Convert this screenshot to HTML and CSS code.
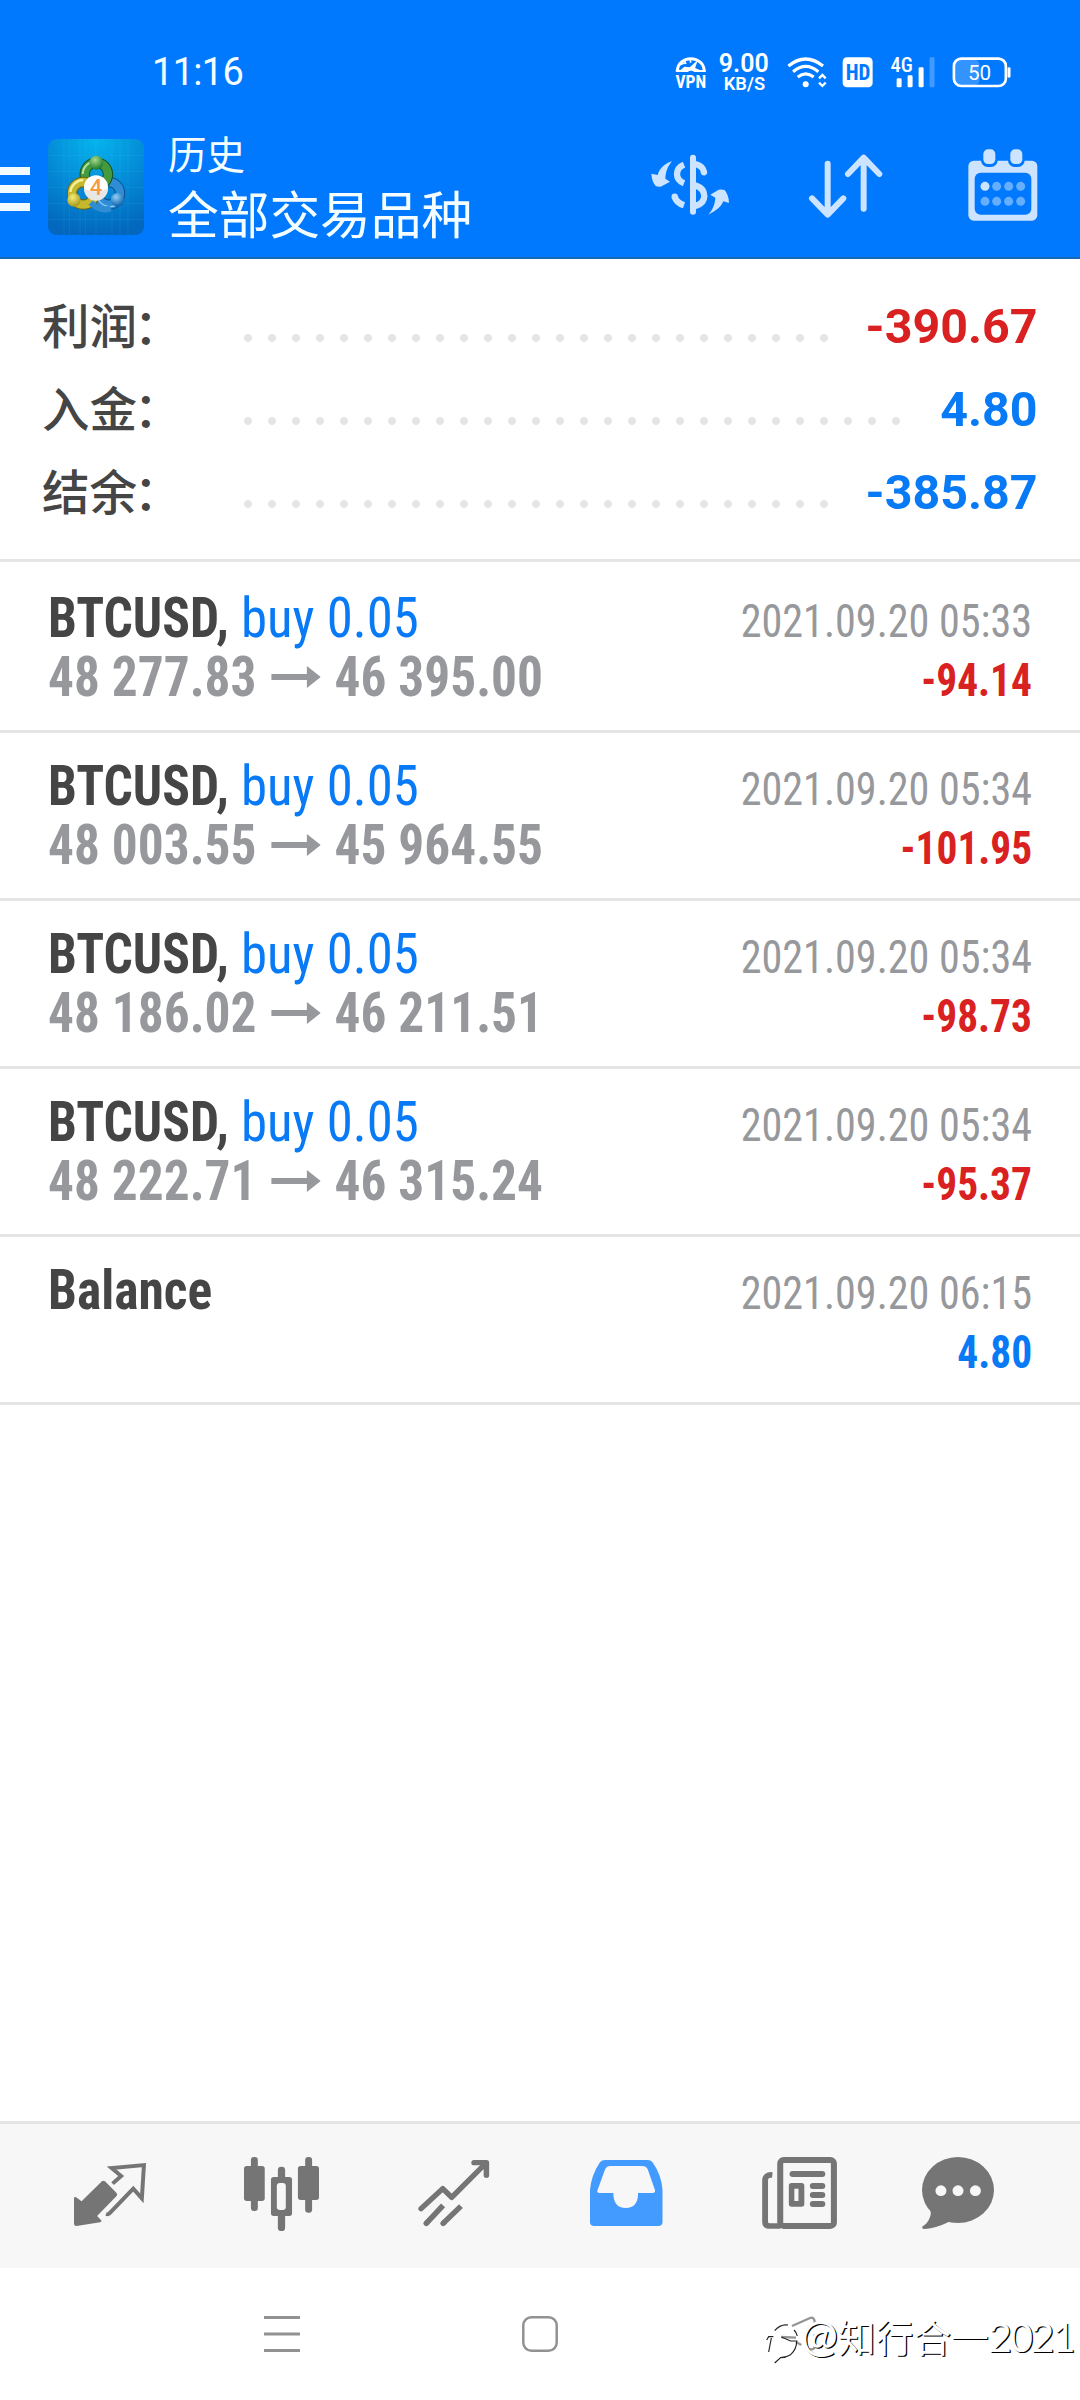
FILE: index.html
```
<!DOCTYPE html>
<html lang="zh-CN">
<head>
<meta charset="utf-8">
<title>历史</title>
<link rel="stylesheet" href="styles.css">
</head>
<body>
<div class="screen">
  <header class="header">
    <div class="status">
      <span class="clock">11:16</span>
      <svg class="status-icons" viewBox="100 20 1020 130" width="340" height="43.3" fill="#fff">
        <!-- vpn -->
        <path d="M113 76A40 36 0 0 1 193 76" fill="none" stroke="#fff" stroke-width="9"/>
        <path d="M108 80V72L122 74L134 64L150 66L174 44L166 68L180 74H198V80H164Q152 72 144 80Z"/>
        <path d="M120 58l16-6M134 44l4 12M152 40v12" stroke="#fff" stroke-width="5"/>
        <text class="cond" x="107" y="127" font-size="56" font-weight="700" textLength="92" lengthAdjust="spacingAndGlyphs">VPN</text>
        <text class="rob" x="237" y="80" font-size="75" font-weight="600" textLength="150">9.00</text>
        <text class="rob" x="252" y="135" font-size="56" font-weight="600" textLength="124" lengthAdjust="spacingAndGlyphs">KB/S</text>
        <!-- wifi -->
        <g fill="none" stroke="#fff" stroke-width="9.5">
          <path d="M446 62Q498 20 550 62M460 79Q498 48 536 79M474 95Q498 76 522 95"/>
          <path d="M538 99l10-10 10 10M538 112l10 10 10-10" stroke-width="7"/>
        </g>
        <circle cx="498" cy="117" r="9"/>
        <!-- hd -->
        <rect x="609" y="36" width="90" height="90" rx="13"/>
        <text class="cond" x="618" y="105" font-size="65" font-weight="700" fill="#0079ff" textLength="74" lengthAdjust="spacingAndGlyphs">HD</text>
        <!-- mobile signal -->
        <text class="cond" x="753" y="80" font-size="59" font-weight="500" textLength="67" lengthAdjust="spacingAndGlyphs">4G</text>
        <rect x="771" y="99" width="15" height="27" rx="4"/>
        <rect x="804" y="90" width="15" height="36" rx="4"/>
        <rect x="837" y="66" width="15" height="60" rx="4"/>
        <rect x="870" y="36" width="15" height="90" rx="4" opacity=".25"/>
        <!-- battery -->
        <rect x="945" y="42" width="75" height="78" rx="16" opacity=".2"/>
        <rect x="943" y="40" width="156" height="82" rx="22" fill="none" stroke="#fff" stroke-width="8"/>
        <rect x="1104" y="66" width="9" height="31" rx="4"/>
        <text class="rob" x="985" y="103" font-size="62" font-weight="400" textLength="70">50</text>
      </svg>
    </div>
    <div class="toolbar">
      <div class="menu"><i></i><i></i><i></i></div>
      <svg class="logo" viewBox="24 27 288 288" width="96" height="96">
        <defs>
          <radialGradient id="bg" cx=".5" cy="0" r="1"><stop offset="0" stop-color="#05b4ec"/><stop offset=".55" stop-color="#0489d6"/><stop offset="1" stop-color="#0267bd"/></radialGradient>
          <radialGradient id="g" cx=".4" cy=".3" r=".7"><stop offset="0" stop-color="#a6dc8c"/><stop offset="1" stop-color="#1d7a2b"/></radialGradient>
          <radialGradient id="y" cx=".4" cy=".3" r=".7"><stop offset="0" stop-color="#f5ee7a"/><stop offset="1" stop-color="#a8981c"/></radialGradient>
          <radialGradient id="b" cx=".4" cy=".3" r=".7"><stop offset="0" stop-color="#8fd0f7"/><stop offset="1" stop-color="#0f62ae"/></radialGradient>
        </defs>
        <rect x="24" y="27" width="288" height="288" rx="26" fill="url(#bg)"/>
        <path d="M72 27V315M88 27V315M120 27V315M136 27V315M168 27V315M216 27V315M240 27V315M264 27V315M24 76H312M24 124H312M24 172H312M24 220H312M24 268H312" stroke="#5fd0ff" stroke-opacity=".16" stroke-width="2"/>
        <g fill="none">
          <circle cx="206" cy="190" r="34" stroke="#0d4f8c" stroke-width="31"/>
          <circle cx="206" cy="190" r="34" stroke="#2f8dd6" stroke-width="25"/>
          <path d="M173 205A40 40 0 0 0 240 216" stroke="#8cc8f0" stroke-width="4"/>
          <circle cx="169" cy="133" r="35" stroke="#14551f" stroke-width="31"/>
          <circle cx="169" cy="133" r="35" stroke="#459a40" stroke-width="25"/>
          <path d="M128 132A42 42 0 0 1 150 98" stroke="#b5e39e" stroke-width="6"/>
          <circle cx="130" cy="190" r="34" stroke="#6b6410" stroke-width="31"/>
          <circle cx="130" cy="190" r="34" stroke="#c4b92c" stroke-width="25"/>
          <path d="M91 186A40 40 0 0 1 130 150" stroke="#f4f09a" stroke-width="7"/>
          <path d="M152 218Q180 246 212 235" stroke="#2f8dd6" stroke-width="18"/>
        </g>
        <circle cx="169" cy="98" r="21" fill="url(#g)"/>
        <circle cx="102" cy="210" r="20" fill="url(#y)"/>
        <circle cx="232" cy="209" r="20" fill="url(#b)"/>
        <circle cx="168" cy="172" r="36" fill="#fff"/>
        <path d="M132 176Q168 192 204 176A36 36 0 0 1 132 176Z" fill="#e9e6e6"/>
        <text class="rob" x="149" y="194" font-size="66" font-weight="500" fill="#f39c45">4</text>
      </svg>
      <div class="titles">
        <div class="title-small">历史</div>
        <div class="title-big">全部交易品种</div>
      </div>
      <svg class="act-currency" viewBox="30 310 240 220" width="80" height="73.3" fill="#cce4ff">
        <path d="M96 350C70 358 58 374 53 391L34 387C35 404 40 417 48 425Q55 427 62 426L90 411L76 402C77 380 84 364 96 350Z"/>
        <path d="M205 510C230 498 245 484 250 470L267 475C267 460 262 447 254 436Q245 433 236 435L211 450L226 459C225 480 217 497 205 510Z"/>
        <rect x="150" y="330" width="18" height="180" rx="9"/>
        <g fill="none" stroke="#cce4ff" stroke-width="19">
          <path d="M132 360C104 372 104 405 132 416"/>
          <path d="M132 482C114 476 107 468 104 456"/>
          <path d="M166 358C182 362 191 370 192 384"/>
          <path d="M166 422C202 435 202 473 166 484"/>
        </g>
        <circle cx="104" cy="456" r="9.5"/><circle cx="192" cy="383" r="9.5"/>
      </svg>
      <svg class="act-sort" viewBox="505 310 225 220" width="75" height="73.3" fill="none" stroke="#cce4ff" stroke-width="18" stroke-linecap="round" stroke-linejoin="round">
        <path d="M564 357V508M517 461L564 510L611 461M672 492V342M625 388L672 339L719 388"/>
      </svg>
      <svg class="act-date" viewBox="983 310 210 220" width="70" height="73.3" fill="#cce4ff">
        <rect x="984" y="348" width="207" height="180" rx="16"/>
        <rect x="1003" y="384" width="170" height="126" rx="18" fill="#0079ff"/>
        <rect x="1022" y="310" width="50" height="57" rx="20" fill="#0079ff"/>
        <rect x="1103" y="310" width="50" height="57" rx="20" fill="#0079ff"/>
        <rect x="1029" y="314" width="36" height="44" rx="14"/>
        <rect x="1110" y="314" width="36" height="44" rx="14"/>
        <circle cx="1034" cy="425" r="13.5"/>
        <g fill="#66afff"><circle cx="1069" cy="425" r="13.5"/><circle cx="1105" cy="425" r="13.5"/><circle cx="1141" cy="425" r="13.5"/><circle cx="1034" cy="470" r="13.5"/><circle cx="1069" cy="470" r="13.5"/><circle cx="1105" cy="470" r="13.5"/><circle cx="1141" cy="470" r="13.5"/></g>
      </svg>
    </div>
  </header>

  <section class="summary">
    <div class="sum-row"><span class="label">利润<span class="colon">：</span></span><span class="dots"></span><span class="value loss">-390.67</span></div>
    <div class="sum-row"><span class="label">入金<span class="colon">：</span></span><span class="dots dots-wide"></span><span class="value gain">4.80</span></div>
    <div class="sum-row"><span class="label">结余<span class="colon">：</span></span><span class="dots"></span><span class="value gain">-385.87</span></div>
  </section>

  <main class="deals">
    <article class="deal">
      <div class="line"><span><b class="symbol">BTCUSD,</b><span class="side">buy 0.05</span></span><time>2021.09.20 05:33</time></div>
      <div class="line"><span class="price">48 277.83<svg class="arrow" viewBox="0 0 50 22" width="53" height="22" preserveAspectRatio="none"><path d="M0 8H36V0L50 11L36 22V14H0Z"/></svg>46 395.00</span><span class="result loss">-94.14</span></div>
    </article>
    <article class="deal">
      <div class="line"><span><b class="symbol">BTCUSD,</b><span class="side">buy 0.05</span></span><time>2021.09.20 05:34</time></div>
      <div class="line"><span class="price">48 003.55<svg class="arrow" viewBox="0 0 50 22" width="53" height="22" preserveAspectRatio="none"><path d="M0 8H36V0L50 11L36 22V14H0Z"/></svg>45 964.55</span><span class="result loss">-101.95</span></div>
    </article>
    <article class="deal">
      <div class="line"><span><b class="symbol">BTCUSD,</b><span class="side">buy 0.05</span></span><time>2021.09.20 05:34</time></div>
      <div class="line"><span class="price">48 186.02<svg class="arrow" viewBox="0 0 50 22" width="53" height="22" preserveAspectRatio="none"><path d="M0 8H36V0L50 11L36 22V14H0Z"/></svg>46 211.51</span><span class="result loss">-98.73</span></div>
    </article>
    <article class="deal">
      <div class="line"><span><b class="symbol">BTCUSD,</b><span class="side">buy 0.05</span></span><time>2021.09.20 05:34</time></div>
      <div class="line"><span class="price">48 222.71<svg class="arrow" viewBox="0 0 50 22" width="53" height="22" preserveAspectRatio="none"><path d="M0 8H36V0L50 11L36 22V14H0Z"/></svg>46 315.24</span><span class="result loss">-95.37</span></div>
    </article>
    <article class="deal">
      <div class="line"><span><b class="symbol">Balance</b></span><time>2021.09.20 06:15</time></div>
      <div class="line"><span class="price">&nbsp;</span><span class="result gain">4.80</span></div>
    </article>
  </main>

  <nav class="tabs">
    <svg viewBox="215 135 209 230" width="72" height="76.7" preserveAspectRatio="none">
      <path d="M215 265Q215 259 221 262L237 274L296 214Q300 210 305 214L338 248Q343 254 338 259L282 318L294 331Q297 335 291 337L222 348Q215 348 215 341Z" fill="#757575"/>
      <path d="M327 221L352 198L324 174L418 165L412 265L387 236L318 310Q314 314 308 312" fill="none" stroke="#757575" stroke-width="11.5"/>
    </svg>
    <svg class="nudge" viewBox="709 135 217 230" width="75" height="76.7" preserveAspectRatio="none" fill="#757575">
      <rect x="729" y="141" width="20" height="162" rx="9"/><rect x="709" y="168" width="60" height="105" rx="8"/>
      <rect x="807" y="170" width="21" height="60" rx="10"/><rect x="807" y="290" width="21" height="73" rx="10"/>
      <rect x="787" y="201" width="61" height="117" rx="8"/><rect x="804" y="219" width="26" height="81" rx="9" fill="#f7f7f7"/>
      <rect x="886" y="141" width="20" height="167" rx="9"/><rect x="865" y="168" width="61" height="102" rx="8"/>
    </svg>
    <svg class="nudge" viewBox="1213 135 208 230" width="71.5" height="76.7" preserveAspectRatio="none" fill="none" stroke="#757575" stroke-width="16" stroke-linejoin="round">
      <path d="M1222 296L1285 236L1311 262L1408 162M1376 158H1412V196" stroke-linecap="round"/>
      <path d="M1286 286L1237 340M1338 288L1286 340"/>
      <path d="M1238 339l-1 1M1287 339l-1 1" stroke-linecap="round"/>
    </svg>
    <svg viewBox="146 135 211 230" width="72.5" height="76.7" preserveAspectRatio="none">
      <path fill="#439bff" fill-rule="evenodd" d="M146 240Q150 195 175 157Q180 150 190 150H313Q323 150 328 157Q354 195 357 240V337Q357 348 344 348H158Q146 348 146 337ZM206 168H297Q310 168 314 178L335 240Q337 249 328 249H286Q286 294 250 294Q214 294 214 249H174Q165 249 168 240L190 178Q194 168 206 168Z"/>
    </svg>
    <svg viewBox="646 135 218 230" width="75" height="76.7" preserveAspectRatio="none" fill="#757575">
      <path d="M676 195Q655 193 655 212V336Q655 348 668 348H700" fill="none" stroke="#757575" stroke-width="17"/>
      <rect x="699" y="150" width="156" height="198" rx="10" fill="none" stroke="#757575" stroke-width="17.5"/>
      <rect x="726" y="183" width="104" height="18" rx="9"/>
      <path fill-rule="evenodd" d="M732 219H761Q769 219 769 227V282Q769 290 761 290H732Q724 290 724 282V227Q724 219 732 219ZM740 236V273H752V236Z"/>
      <rect x="785" y="219" width="45" height="18" rx="9"/><rect x="785" y="246" width="45" height="18" rx="9"/><rect x="785" y="273" width="45" height="18" rx="9"/>
    </svg>
    <svg class="chat" viewBox="1109 135 209 230" width="72" height="76.7" preserveAspectRatio="none" fill="#757575">
      <ellipse cx="1213.5" cy="240" rx="104.5" ry="99"/>
      <path d="M1130 295Q1138 305 1132 322Q1126 340 1111 349Q1106 357 1118 357Q1150 354 1188 335Z"/>
      <g fill="#f7f7f7"><circle cx="1164" cy="242" r="16"/><circle cx="1213.5" cy="242" r="16"/><circle cx="1264" cy="242" r="16"/></g>
    </svg>
  </nav>

  <footer class="system">
    <svg width="36" height="36" viewBox="0 0 36 36" stroke="#929292" stroke-width="3"><path d="M0 1.5H36M0 18H36M0 34.5H36"/></svg>
    <svg width="36" height="36" viewBox="0 0 36 36" fill="none" stroke="#929292" stroke-width="2.5"><rect x="1.3" y="1.3" width="33.4" height="33.4" rx="8"/></svg>
    <div class="watermark">
      <svg class="knot" width="52" height="50" viewBox="70 75 156 150" fill="none">
        <path d="M154 108L208 84Q222 80 222 98M222 132V172Q220 180 204 178M122 141L166 143M166 156L182 165" stroke="#959595" stroke-width="7"/>
        <path d="M78 150L84 140H98M102 122Q118 102 142 105M92 144L84 186M122 141L150 153H170M160 120Q168 128 170 138M168 154Q168 178 150 194Q134 203 120 203L102 219" stroke="#222" stroke-width="3.5"/>
      </svg>
      <span class="mark"><span class="at">@</span>知行合一<span class="latin">2021</span></span>
    </div>
  </footer>
</div>
</body>
</html>
```
FILE: styles.css
```
* { box-sizing: border-box; }
body { margin: 0; background: #fff; }
svg { display: block; flex: none; }
.screen {
  width: 1080px;
  height: 2400px;
  display: flex;
  flex-direction: column;
  font-family: Roboto, "Noto Sans CJK SC", sans-serif;
  color: #454545;
  overflow: hidden;
}
.cond { font-family: "Roboto Condensed", Roboto, sans-serif; }
.rob { font-family: Roboto, sans-serif; }
.status-icons { overflow: visible; }

/* header */
.header { height: 259px; background: #0079ff; border-bottom: 2px solid #1768b8; color: #f4fdff; }
.status { height: 130px; padding: 51.7px 66.7px 0 152px; display: flex; justify-content: space-between; }
.clock { font-size: 38px; line-height: 40px; letter-spacing: -.7px; }
.toolbar { display: flex; align-items: flex-start; }
.menu { width: 30px; padding-top: 37px; display: grid; gap: 10px; }
.menu i { height: 8px; background: #f0faff; }
.logo { margin: 9px 0 0 18px; }
.titles { flex: 1; padding: 1.5px 0 0 24px; font-family: "Noto Sans CJK SC", sans-serif; white-space: nowrap; }
.title-small { font-size: 38.5px; line-height: 40px; }
.title-big { font-size: 50.7px; line-height: 52px; margin-top: 14px; }
.act-currency, .act-sort, .act-date { margin-top: 18.3px; }
.act-sort { margin-left: 78.3px; }
.act-date { margin: 18.3px 42.3px 0 84.3px; }

/* totals */
.summary { height: 303px; padding: 25px 42.5px 0 42px; border-bottom: 3px solid #e5e5e5; }
.sum-row { height: 83px; display: flex; align-items: center; }
.label { width: 194px; font: 500 47.5px/79px "Noto Sans CJK SC", sans-serif; height: 83px; white-space: nowrap; }
.colon { margin-left: -3px; }
.dots {
  width: 600px;
  height: 8px;
  margin-top: 24px;
  background: radial-gradient(circle at 12px 4px, #e5e5e5 3.6px, transparent 4.2px) 0 0 / 24px 8px repeat-x;
}
.dots-wide { width: 672px; }
.value { margin: 2px 0 0 auto; font-size: 48.4px; font-weight: 700; }
.loss { color: #d92121; }
.gain { color: #087af5; }

/* history rows */
.deals { flex: 1; font-family: "Roboto Condensed", Roboto, sans-serif; }
.deal { height: 168px; padding: 23.8px 48px 0; border-bottom: 3px solid #e5e5e5; }
.deal:first-child { height: 171px; padding-top: 26.8px; }
.line { height: 59px; display: flex; justify-content: space-between; align-items: baseline; line-height: 59px; white-space: nowrap; }
.symbol, .side, .price, time, .result { display: inline-block; transform-origin: 0 50%; }
.symbol, .side, .price { font-size: 55px; }
.symbol, .price { font-weight: 700; transform: scaleX(.937); }
.symbol { margin-right: -12px; }
.price { color: #97989c; transform: scaleX(.934); }
.side { margin-left: 12.5px; color: #087af5; transform: scaleX(.96); }
.arrow { display: inline-block; margin: 0 14.5px 0 16px; vertical-align: 8px; fill: #97989c; }
time, .result { font-size: 46px; transform-origin: 100% 50%; }
time { color: #97989c; transform: scaleX(.916); }
.result { font-weight: 700; transform: scaleX(.9); }

/* bottom tabs */
.tabs {
  height: 147px;
  padding: 31px 86px 0 74px;
  display: flex;
  justify-content: space-between;
  background: #f7f7f7;
  border-top: 3px solid #e5e5e5;
}
.nudge { margin: 0 1px 0 -1px; }
.chat { margin-left: -14px; }

/* system navigation */
.system { height: 132px; padding: 48px 0 0 264px; display: flex; align-items: flex-start; gap: 222px; }
.watermark { display: flex; margin: -18px 0 0 -16px; }
.knot { margin-top: 17px; }
.mark { margin-left: -15px; font: 37.7px/74px "Noto Sans CJK SC", sans-serif; color: #fff; text-shadow: 1.2px 1.2px .4px #000; white-space: nowrap; }
.at, .latin { font-family: Lato, sans-serif; }
.at { font-size: 44px; }
.latin { font-size: 40px; letter-spacing: -2px; }
```
